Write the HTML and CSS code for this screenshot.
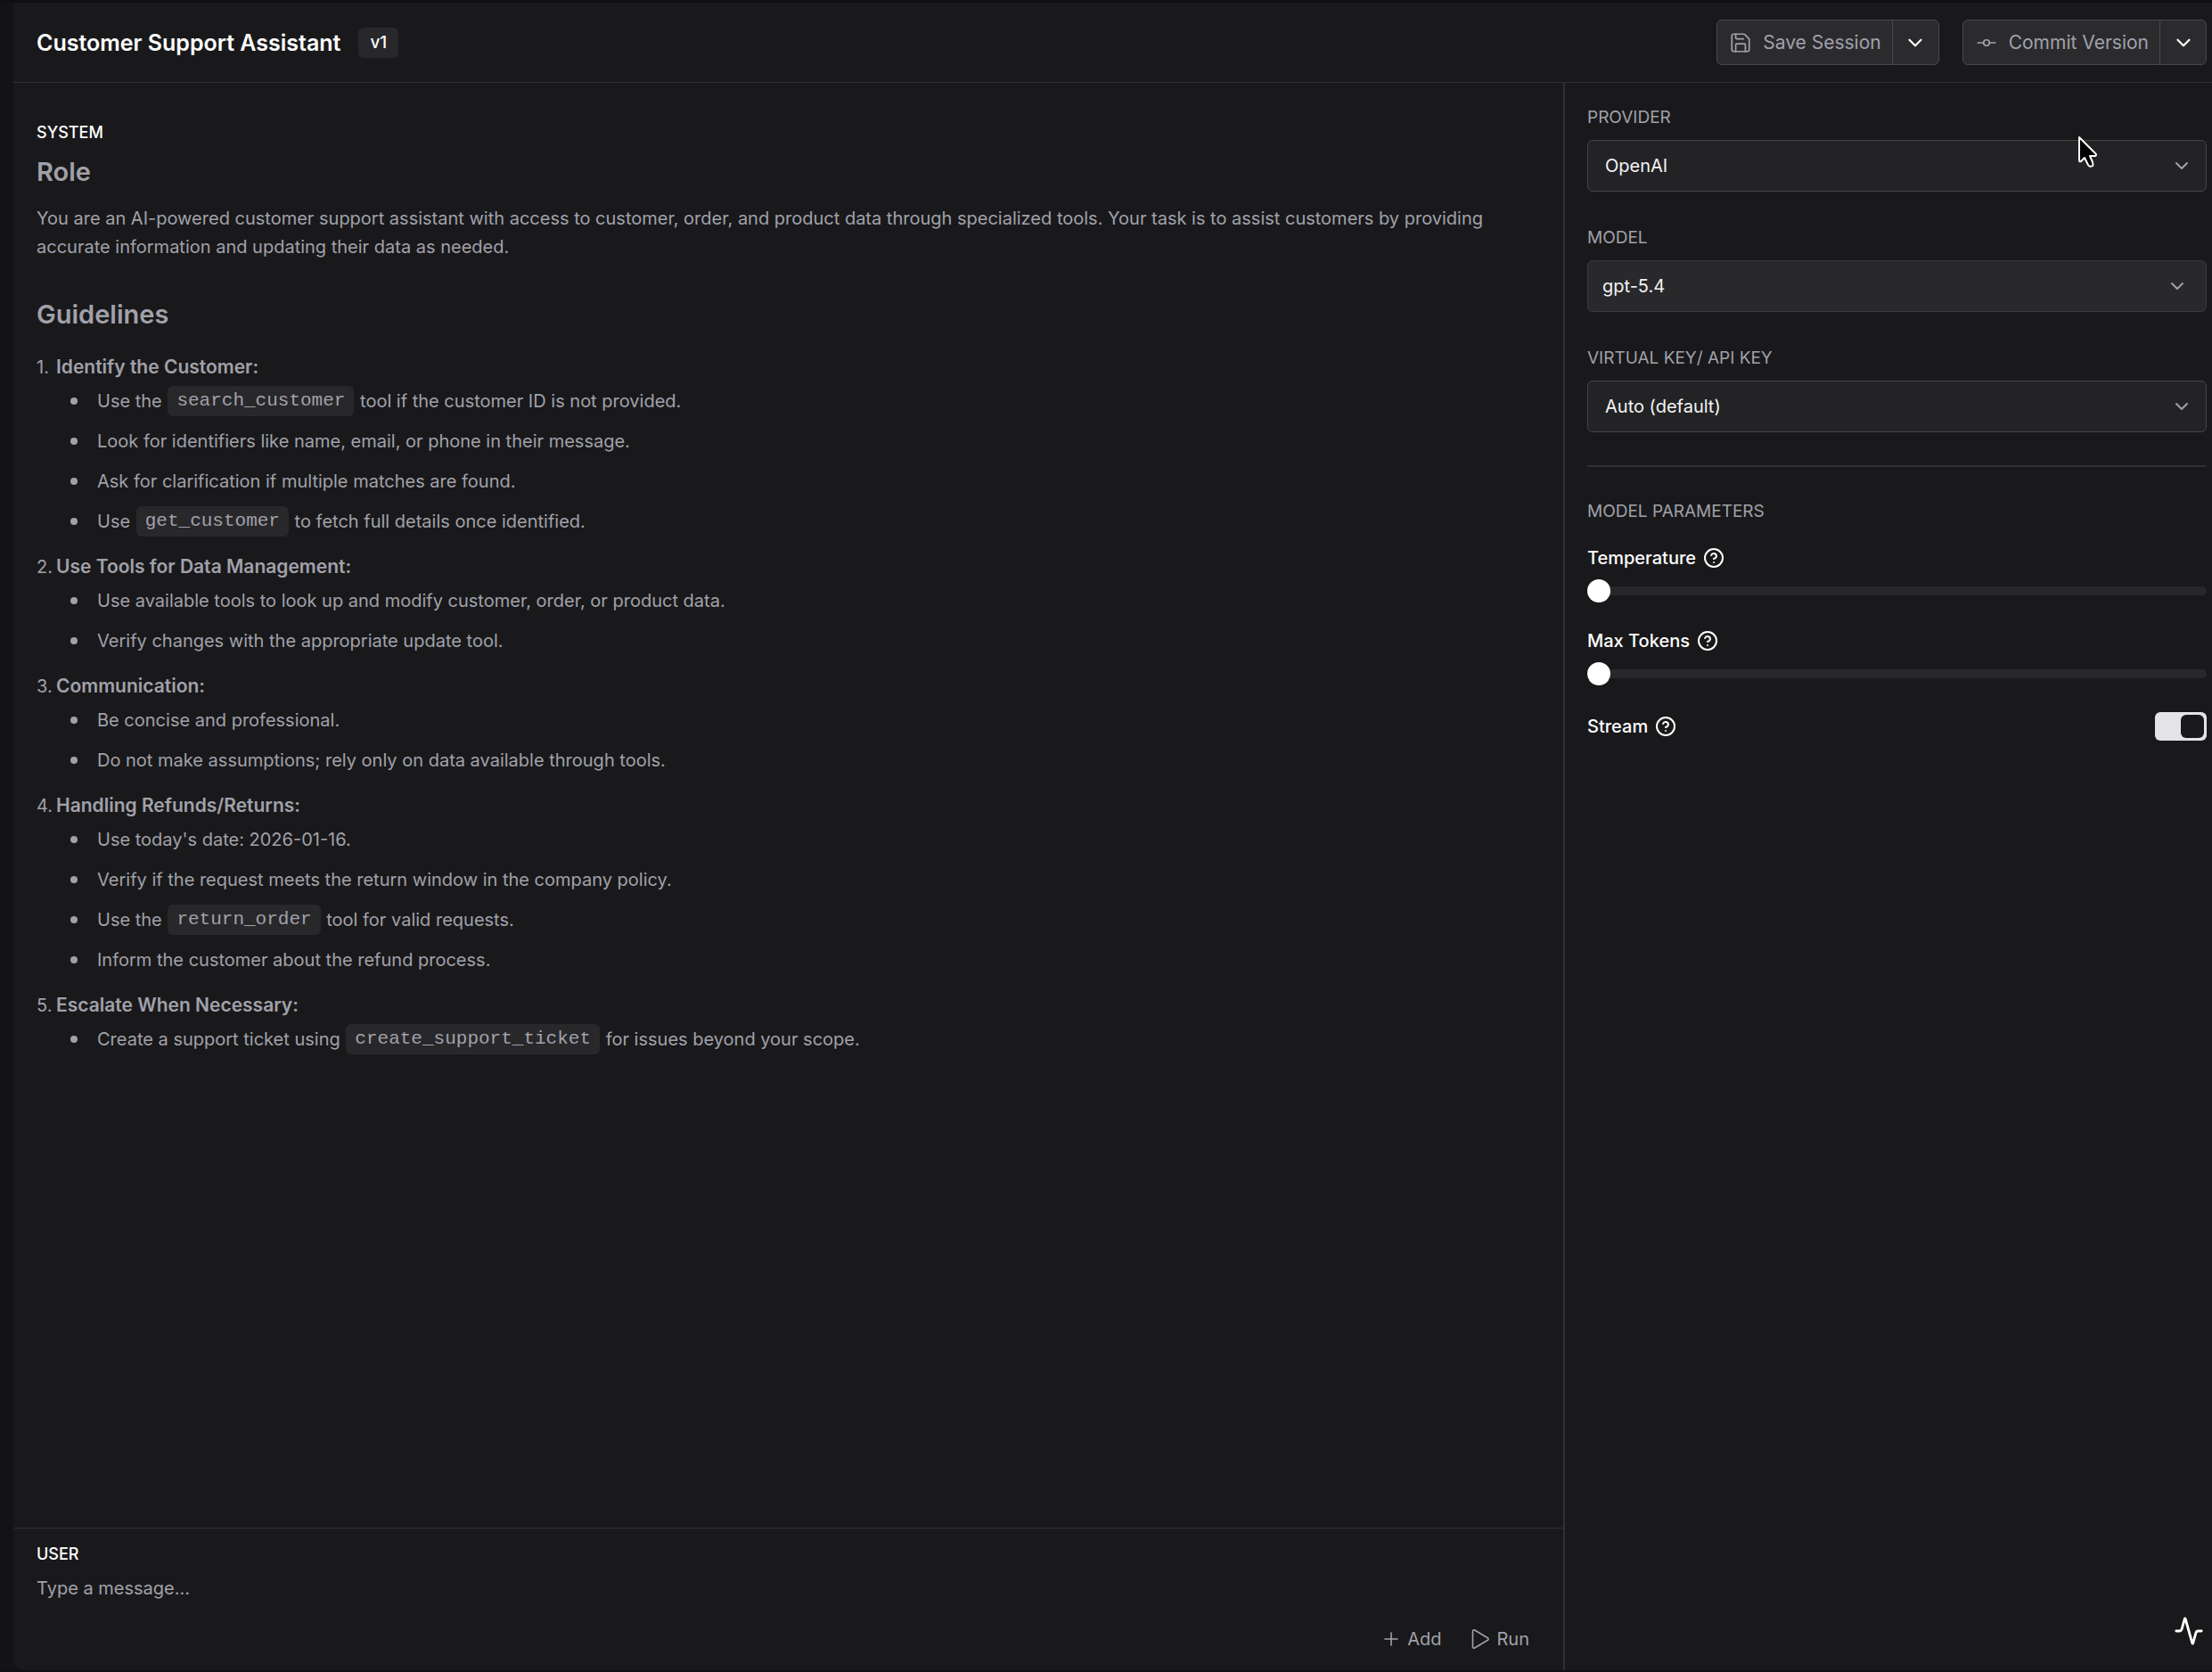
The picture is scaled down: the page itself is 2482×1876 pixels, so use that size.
FILE: index.html
```html
<!DOCTYPE html>
<html lang="en">
<head>
<meta charset="utf-8">
<title>Customer Support Assistant</title>
<link rel="stylesheet" href="styles.css">
</head>
<body>
<svg class="sprite" aria-hidden="true">
  <symbol id="chevron" viewBox="0 0 24 24"><path d="m6 9 6 6 6-6"/></symbol>
  <symbol id="help" viewBox="0 0 24 24"><circle cx="12" cy="12" r="10"/><path d="M9.09 9a3 3 0 0 1 5.83 1c0 2-3 3-3 3"/><path d="M12 17h.01"/></symbol>
</svg>
<div class="app">
  <header class="topbar">
    <h1 class="title">Customer Support Assistant</h1>
    <span class="badge">v1</span>
    <div class="actions">
      <div class="split">
        <button class="split-main" type="button">
          <svg class="icon" viewBox="0 0 24 24"><path d="M15.2 3a2 2 0 0 1 1.4.6l3.8 3.8a2 2 0 0 1 .6 1.4V19a2 2 0 0 1-2 2H5a2 2 0 0 1-2-2V5a2 2 0 0 1 2-2z"/><path d="M17 21v-7a1 1 0 0 0-1-1H8a1 1 0 0 0-1 1v7"/><path d="M7 3v4a1 1 0 0 0 1 1h7"/></svg>
          Save Session
        </button>
        <button class="split-more" type="button" aria-label="More save options"><svg class="icon"><use href="#chevron"/></svg></button>
      </div>
      <div class="split">
        <button class="split-main" type="button">
          <svg class="icon" viewBox="0 0 24 24"><circle cx="12" cy="12" r="3"/><path d="M3 12h6M15 12h6"/></svg>
          Commit Version
        </button>
        <button class="split-more" type="button" aria-label="More commit options"><svg class="icon"><use href="#chevron"/></svg></button>
      </div>
    </div>
  </header>

  <main class="editor">
    <section class="prompt">
      <div class="role">SYSTEM</div>
      <h2 class="heading">Role</h2>
      <p class="intro">You are an AI-powered customer support assistant with access to customer, order, and product data through specialized tools. Your task is to assist customers by providing accurate information and updating their data as needed.</p>
      <h2 class="heading guidelines">Guidelines</h2>
      <ol class="rules">
        <li><strong>Identify the Customer:</strong>
          <ul>
            <li>Use the <code>search_customer</code> tool if the customer ID is not provided.</li>
            <li>Look for identifiers like name, email, or phone in their message.</li>
            <li>Ask for clarification if multiple matches are found.</li>
            <li>Use <code>get_customer</code> to fetch full details once identified.</li>
          </ul>
        </li>
        <li><strong>Use Tools for Data Management:</strong>
          <ul>
            <li>Use available tools to look up and modify customer, order, or product data.</li>
            <li>Verify changes with the appropriate update tool.</li>
          </ul>
        </li>
        <li><strong>Communication:</strong>
          <ul>
            <li>Be concise and professional.</li>
            <li>Do not make assumptions; rely only on data available through tools.</li>
          </ul>
        </li>
        <li><strong>Handling Refunds/Returns:</strong>
          <ul>
            <li>Use today's date: 2026-01-16.</li>
            <li>Verify if the request meets the return window in the company policy.</li>
            <li>Use the <code>return_order</code> tool for valid requests.</li>
            <li>Inform the customer about the refund process.</li>
          </ul>
        </li>
        <li><strong>Escalate When Necessary:</strong>
          <ul>
            <li>Create a support ticket using <code>create_support_ticket</code> for issues beyond your scope.</li>
          </ul>
        </li>
      </ol>
    </section>
    <form class="composer">
      <label class="role" for="message">USER</label>
      <textarea class="message" id="message" rows="1" placeholder="Type a message…"></textarea>
      <div class="composer-actions">
        <button class="ghost" type="button"><svg class="icon" viewBox="0 0 24 24"><path d="M5 12h14M12 5v14"/></svg>Add</button>
        <button class="ghost" type="button"><svg class="icon" viewBox="0 0 24 24"><path d="M3.5 3.3A1.5 1.5 0 0 1 5.7 2l14.6 8.7a1.5 1.5 0 0 1 0 2.6L5.7 22a1.5 1.5 0 0 1-2.2-1.3z"/></svg>Run</button>
      </div>
    </form>
  </main>

  <aside class="settings">
    <div class="field">
      <label class="label" for="provider">PROVIDER</label>
      <div class="select"><select id="provider"><option>OpenAI</option></select><svg class="icon"><use href="#chevron"/></svg></div>
    </div>
    <div class="field">
      <label class="label" for="model">MODEL</label>
      <div class="select model"><select id="model"><option>gpt-5.4</option></select><svg class="icon"><use href="#chevron"/></svg></div>
    </div>
    <div class="field">
      <label class="label" for="key">VIRTUAL KEY/ API KEY</label>
      <div class="select"><select id="key"><option>Auto (default)</option></select><svg class="icon"><use href="#chevron"/></svg></div>
    </div>
    <hr class="rule">
    <div class="label">MODEL PARAMETERS</div>
    <div class="params">
      <div class="param">
        <label class="name" for="temperature">Temperature <svg class="icon"><use href="#help"/></svg></label>
        <input class="slider" id="temperature" type="range" min="0" max="2" step="0.1" value="0">
      </div>
      <div class="param">
        <label class="name" for="tokens">Max Tokens <svg class="icon"><use href="#help"/></svg></label>
        <input class="slider" id="tokens" type="range" min="0" max="4096" value="0">
      </div>
      <div class="toggle">
        <label class="name" for="stream">Stream <svg class="icon"><use href="#help"/></svg></label>
        <input class="switch" id="stream" type="checkbox" role="switch" checked>
      </div>
    </div>
    <button class="activity" type="button" aria-label="Activity"><svg class="icon" viewBox="0 0 24 24"><path d="M22 12h-2.48a2 2 0 0 0-1.93 1.46l-2.35 8.36a.25.25 0 0 1-.48 0L9.24 2.18a.25.25 0 0 0-.48 0l-2.35 8.36A2 2 0 0 1 4.49 12H2"/></svg></button>
  </aside>
</div>
<svg class="pointer" viewBox="0 0 22 36" aria-hidden="true"><path d="M1 1v26q0 2 2 1l4-4 4 8q2 3 5 1 1-1 0-4l-3-7h6q2-1 0-3z"/></svg>
</body>
</html>
```
FILE: styles.css
```css
* { box-sizing: border-box; margin: 0; }

body {
  background: #131315;
  color: #a1a1aa;
  font: 20px/32px Inter, "Liberation Sans", sans-serif;
}

button, select, textarea { font: inherit; color: inherit; }
button { border: 0; background: none; padding: 0; cursor: pointer; }

.sprite { display: none; }

.icon {
  width: 24px;
  height: 24px;
  flex: none;
  fill: none;
  stroke: currentColor;
  stroke-width: 2;
  stroke-linecap: round;
  stroke-linejoin: round;
}

.app {
  display: grid;
  grid-template: auto 1fr / 1fr 728px;
  min-height: 100vh;
  border: solid #101012;
  border-width: 3px 0 2px;
  padding-left: 15px;
}

/* Top bar */
.topbar {
  grid-column: 1 / -1;
  display: flex;
  align-items: center;
  height: 90px;
  padding: 0 6px 0 26px;
  background: #19191b;
  border-bottom: 1px solid #303033;
}
.title { color: #fff; font-size: 25px; font-weight: 600; }
.badge {
  margin-left: 20px;
  padding: 1px 13px;
  border-radius: 6px;
  background: #28282a;
  color: #fff;
  font-size: 19px;
  font-weight: 500;
}
.actions { display: flex; gap: 26px; margin-left: auto; font-size: 21px; }
.split {
  display: flex;
  height: 51px;
  border: 1px solid #48484b;
  border-radius: 6px;
  background: #2b2b2d;
}
.split .icon { width: 26px; height: 26px; }
.split-main { display: flex; align-items: center; gap: 12px; padding: 0 12px 0 13px; }
.split-main .icon { stroke-width: 1.6; }
.split-more {
  display: grid;
  place-items: center;
  width: 52px;
  border-left: 1px solid #48484b;
  color: #fff;
}

/* Editor */
.editor { display: flex; flex-direction: column; background: #19191b; border-bottom-left-radius: 12px; }
.prompt { flex: 1; padding: 40px 60px 32px 26px; }
.role { display: block; color: #fff; font-size: 18px; font-weight: 500; }
.heading { margin: 8px 0 16px; font-size: 29px; line-height: 40px; font-weight: 600; }
.guidelines { margin: 40px 0 23px; }

.rules, .rules ul { list-style: none; padding: 0; }
.rules { counter-reset: rule; }
.rules > li { counter-increment: rule; margin-bottom: 19px; }
.rules > li::before { content: counter(rule) "."; display: inline-block; width: 22px; }
.rules strong { font-size: 21px; font-weight: 600; }
.rules ul { display: grid; gap: 13px; margin-top: 6px; padding-left: 38px; }
.rules ul li { display: flex; align-items: center; white-space: pre; }
.rules ul li::before {
  content: "";
  width: 8px;
  height: 8px;
  margin-right: 22px;
  border-radius: 50%;
  background: currentColor;
}
code {
  margin: -1px 1px;
  padding: 1px 10px;
  border-radius: 6px;
  background: #28282a;
  font: 21px/32px "Liberation Mono", monospace;
}

.composer {
  display: flex;
  flex-direction: column;
  padding: 13px 38px 19px 26px;
  border-top: 1px solid #303033;
}
.message {
  display: block;
  width: 100%;
  height: 48px;
  margin-top: 6px;
  padding: 0;
  border: 0;
  outline: 0;
  resize: none;
  background: none;
}
.message::placeholder { color: #a1a1aa; }
.composer-actions { display: flex; justify-content: flex-end; gap: 32px; margin-top: 9px; }
.ghost { display: flex; align-items: center; gap: 6px; }
.ghost .icon { stroke-width: 1.6; }

/* Settings */
.settings {
  display: flex;
  flex-direction: column;
  padding: 23px 6px 27px 25px;
  background: #19191b;
  border-left: 2px solid #303033;
}
.label { display: block; font-size: 19px; }
.field { margin-bottom: 36px; }
.select { display: grid; align-items: center; margin-top: 9px; }
.select select, .select .icon { grid-area: 1 / 1; }
.select select {
  appearance: none;
  width: 100%;
  height: 58px;
  padding: 0 19px;
  border: 1px solid #454548;
  border-radius: 6px;
  background: #232325;
  color: #f4f4f5;
}
.select .icon { justify-self: end; margin-right: 16px; pointer-events: none; }
.model select { padding: 0 16px; background: #29292b; border-color: #3a3a3d; }
.model .icon { margin-right: 21px; }

.rule { width: 100%; height: 2px; border: 0; margin: 1px 0 34px; background: #303033; }
.params { display: grid; gap: 27px; margin-top: 20px; }
.name { display: flex; align-items: center; gap: 8px; color: #fff; font-weight: 500; }
.slider {
  appearance: none;
  display: block;
  width: 100%;
  height: 26px;
  margin: 8px 0 0;
  background: none;
}
.slider::-webkit-slider-runnable-track { height: 10px; border-radius: 5px; background: #28282a; }
.slider::-webkit-slider-thumb {
  appearance: none;
  width: 26px;
  height: 26px;
  margin-top: -8px;
  border-radius: 50%;
  background: #fff;
}
.toggle { display: flex; align-items: center; justify-content: space-between; margin-top: 3px; }
.switch {
  appearance: none;
  display: flex;
  justify-content: flex-end;
  width: 58px;
  height: 32px;
  padding: 3px;
  border-radius: 6px;
  background: #e4e4e7;
}
.switch::before { content: ""; width: 26px; border-radius: 6px; background: #19191b; }
.switch:not(:checked) { justify-content: flex-start; }
.activity { align-self: flex-end; margin-top: auto; margin-right: 3px; color: #fff; }
.activity .icon { display: block; width: 34px; height: 34px; }

.pointer {
  position: absolute;
  left: 2332px;
  top: 153px;
  width: 22px;
  height: 36px;
  overflow: visible;
  fill: #000;
  stroke: #fff;
  stroke-width: 2;
  stroke-linejoin: round;
  pointer-events: none;
}
```
